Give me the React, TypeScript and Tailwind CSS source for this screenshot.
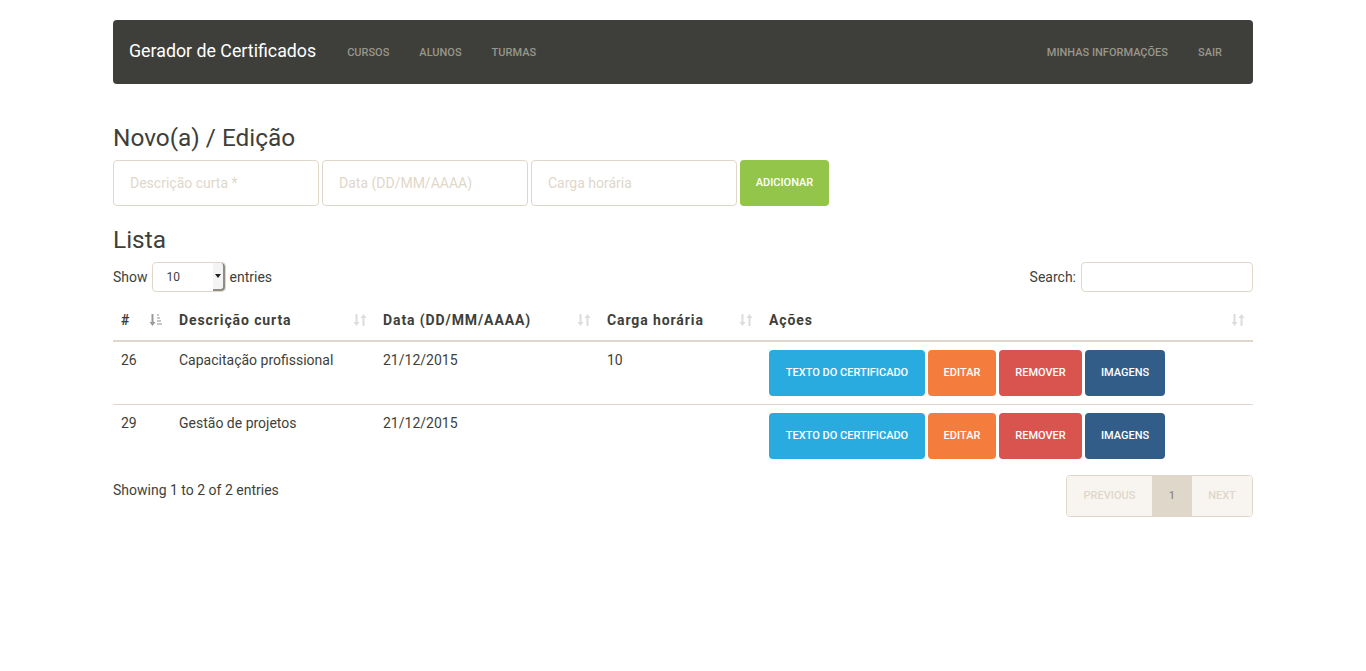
import React from "react";

const SortBoth = () => (
  <svg width="14" height="16" viewBox="0 0 14 16" className="shrink-0">
    <g fill="#dcdcdc">
      <rect x="2.5" y="2" width="2" height="9" />
      <polygon points="0.5,10 6.5,10 3.5,14" />
      <rect x="9.5" y="5" width="2" height="9" />
      <polygon points="7.5,6 13.5,6 10.5,2" />
    </g>
  </svg>
);

const SortAsc = () => (
  <svg width="14" height="16" viewBox="0 0 14 16" className="shrink-0">
    <g fill="#9a9a9a">
      <rect x="2.5" y="2" width="2" height="9" />
      <polygon points="0.5,10 6.5,10 3.5,14" />
    </g>
    <g fill="#c8c8c8">
      <rect x="8" y="2" width="2" height="2" />
      <rect x="8" y="5" width="3" height="2" />
      <rect x="8" y="8" width="4" height="2" />
      <rect x="8" y="11" width="5" height="2" />
    </g>
  </svg>
);

const font = { fontFamily: "Roboto, 'Liberation Sans', sans-serif" };

function ActionButtons() {
  return (
    <div className="flex gap-[3px]">
      <button className="h-[46px] w-[156px] rounded-[4px] bg-[#29abe0] text-[11px] font-medium text-white">TEXTO DO CERTIFICADO</button>
      <button className="h-[46px] w-[68px] rounded-[4px] bg-[#f47c3c] text-[11px] font-medium text-white">EDITAR</button>
      <button className="h-[46px] w-[83px] rounded-[4px] bg-[#d9534f] text-[11px] font-medium text-white">REMOVER</button>
      <button className="h-[46px] w-[80px] rounded-[4px] bg-[#325d88] text-[11px] font-medium text-white">IMAGENS</button>
    </div>
  );
}

export default function App() {
  const rows = [
    { id: "26", desc: "Capacitação profissional", data: "21/12/2015", carga: "10" },
    { id: "29", desc: "Gestão de projetos", data: "21/12/2015", carga: "" },
  ];
  return (
    <div style={font} className="min-h-[671px] bg-white text-[14px] text-[#3e3f3a]">
      <div className="mx-auto w-[1140px] pt-[20px]">
        {/* Navbar */}
        <nav className="flex h-[64px] items-center justify-between rounded-[4px] bg-[#3e3f3a] px-[16px]">
          <div className="flex items-center">
            <span className="mb-[2px] text-[17.8px] text-white">Gerador de Certificados</span>
            <div className="ml-[16px] mt-[2px] flex">
              {["CURSOS", "ALUNOS", "TURMAS"].map((t) => (
                <span key={t} className="px-[15px] text-[11px] font-medium text-[#98978b]">{t}</span>
              ))}
            </div>
          </div>
          <div className="mt-[2px] flex">
            {["MINHAS INFORMAÇÕES", "SAIR"].map((t) => (
              <span key={t} className="px-[15px] text-[11px] font-medium text-[#98978b]">{t}</span>
            ))}
          </div>
        </nav>

        {/* Form */}
        <h3 className="mt-[38px] text-[24.4px] leading-[32px]">Novo(a) / Edição</h3>
        <div className="mt-[6px] flex gap-[3px]">
          {["Descrição curta *", "Data (DD/MM/AAAA)", "Carga horária"].map((p) => (
            <input
              key={p}
              placeholder={p}
              className="h-[46px] w-[206px] rounded-[4px] border border-[#dfd7ca] px-[16px] text-[14px] outline-none placeholder:text-[#dfd7ca]"
            />
          ))}
          <button className="h-[46px] w-[89px] rounded-[4px] bg-[#93c54b] text-[11px] font-medium text-white">ADICIONAR</button>
        </div>

        {/* List */}
        <h3 className="mt-[18px] text-[24.4px] leading-[32px]">Lista</h3>
        <div className="mt-[6px] flex items-center justify-between">
          <div className="flex items-center">
            <span className="mr-[4px]">Show</span>
            <div className="relative mr-[4px] flex h-[30px] w-[74px] items-center rounded-[4px] border border-[#dfd7ca] pl-[14px] text-[12px]">
              10
              <div className="absolute right-0 top-0 flex h-full w-[12px] items-center justify-center rounded-r-[4px] border-r-2 border-b-2 border-[#8e8c84] bg-[#f4f4f4]">
                <svg width="6" height="4" viewBox="0 0 6 4"><polygon points="0,0 6,0 3,4" fill="#222" /></svg>
              </div>
            </div>
            <span>entries</span>
          </div>
          <div className="flex items-center gap-[5px]">
            <span>Search:</span>
            <input className="h-[30px] w-[172px] rounded-[4px] border border-[#dfd7ca] outline-none" />
          </div>
        </div>

        <table className="mt-[10px] w-full border-collapse">
          <thead>
            <tr className="border-b-2 border-[#dfd7ca]">
              {[
                { t: "#", w: "w-[58px]", icon: <SortAsc /> },
                { t: "Descrição curta", w: "w-[204px]", icon: <SortBoth /> },
                { t: "Data (DD/MM/AAAA)", w: "w-[224px]", icon: <SortBoth /> },
                { t: "Carga horária", w: "w-[162px]", icon: <SortBoth /> },
                { t: "Ações", w: "", icon: <SortBoth /> },
              ].map((c) => (
                <th key={c.t} className={`${c.w} px-[8px] pt-[8px] pb-[10px] text-left font-bold leading-[20px] tracking-[0.9px]`}>
                  <div className="flex items-center justify-between">
                    <span>{c.t}</span>
                    {c.icon}
                  </div>
                </th>
              ))}
            </tr>
          </thead>
          <tbody>
            {rows.map((r, i) => (
              <tr key={r.id} className={i === 0 ? "border-b border-[#dfd7ca]" : ""}>
                <td className="px-[8px] pt-[8px] pb-[8px] align-top leading-[20px]">{r.id}</td>
                <td className="px-[8px] pt-[8px] align-top leading-[20px]">{r.desc}</td>
                <td className="px-[8px] pt-[8px] align-top leading-[20px]">{r.data}</td>
                <td className="px-[8px] pt-[8px] align-top leading-[20px]">{r.carga}</td>
                <td className="px-[8px] py-[8px] align-top">
                  <ActionButtons />
                </td>
              </tr>
            ))}
          </tbody>
        </table>

        <div className="mt-[8px] flex items-start justify-between">
          <div className="pt-[5px] leading-[20px]">Showing 1 to 2 of 2 entries</div>
          <div className="flex h-[42px] overflow-hidden rounded-[4px] border border-[#dfd7ca] text-[11px] font-medium">
            <span className="flex w-[85px] items-center justify-center bg-[#f8f5f0] text-[#dfd7ca]">PREVIOUS</span>
            <span className="flex w-[40px] items-center justify-center bg-[#dfd7ca] text-[#8e8c84]">1</span>
            <span className="flex w-[60px] items-center justify-center bg-[#f8f5f0] text-[#dfd7ca]">NEXT</span>
          </div>
        </div>
      </div>
    </div>
  );
}
